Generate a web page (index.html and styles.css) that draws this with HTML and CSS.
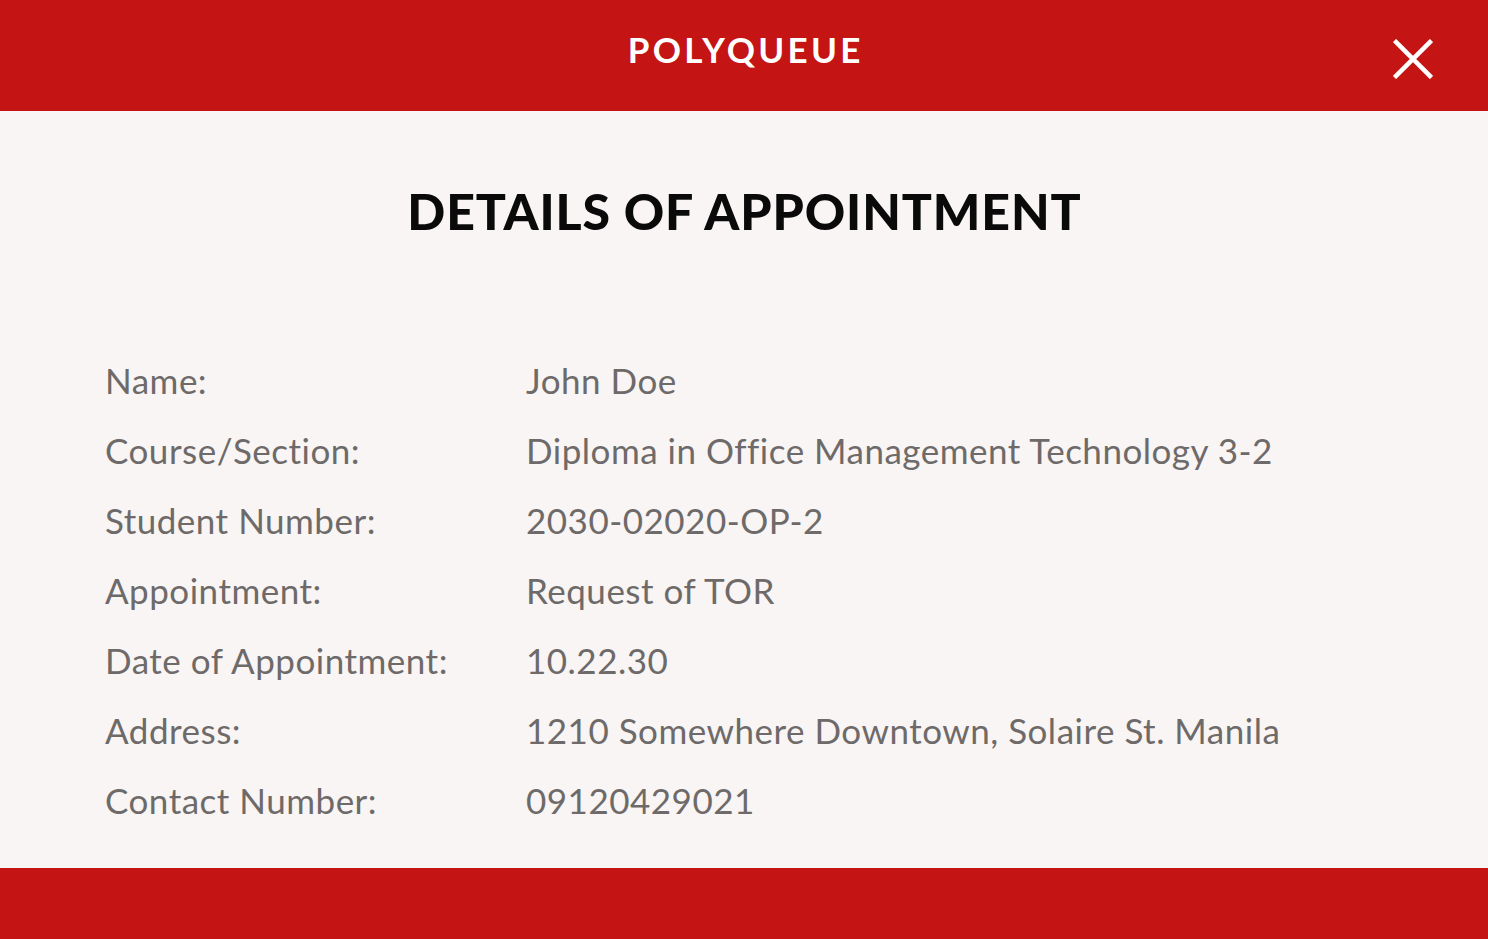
FILE: index.html
```html
<!DOCTYPE html>
<html lang="en">
<head>
<meta charset="utf-8">
<title>Polyqueue - Details of Appointment</title>
<link rel="stylesheet" href="styles.css">
</head>
<body>
<div class="page">
  <header class="topbar">
    <div class="brand">POLYQUEUE</div>
    <button class="close" aria-label="Close">
      <svg width="40" height="40" viewBox="0 0 40 40"><path d="M1.5 1.5 L38.5 38.5 M38.5 1.5 L1.5 38.5" stroke="#fff" stroke-width="4.5" fill="none"/></svg>
    </button>
  </header>
  <main class="content">
    <h1 class="heading">DETAILS OF APPOINTMENT</h1>
    <dl class="details">
      <div class="row"><dt>Name:</dt><dd>John Doe</dd></div>
      <div class="row"><dt>Course/Section:</dt><dd>Diploma in Office Management Technology 3-2</dd></div>
      <div class="row"><dt>Student Number:</dt><dd>2030-02020-OP-2</dd></div>
      <div class="row"><dt>Appointment:</dt><dd>Request of TOR</dd></div>
      <div class="row"><dt>Date of Appointment:</dt><dd>10.22.30</dd></div>
      <div class="row"><dt>Address:</dt><dd>1210 Somewhere Downtown, Solaire St. Manila</dd></div>
      <div class="row"><dt>Contact Number:</dt><dd>09120429021</dd></div>
    </dl>
  </main>
  <footer class="bottombar"></footer>
</div>
</body>
</html>
```

FILE: styles.css
```css
* { box-sizing: border-box; }
html, body { margin: 0; padding: 0; }
body {
  font-family: Lato, "Open Sans", sans-serif;
  background: #f8f5f4;
}
.page {
  height: 939px;
  display: flex;
  flex-direction: column;
}
.topbar {
  height: 111px;
  background: #c41414;
  display: flex;
  align-items: center;
  justify-content: center;
  position: relative;
  flex-shrink: 0;
}
.brand {
  color: #fff;
  font-weight: 700;
  font-size: 35px;
  letter-spacing: 3.25px;
  padding-left: 3.25px;
  margin-top: -14px;
}
.close {
  position: absolute;
  right: 55px;
  top: 39px;
  background: none;
  border: 0;
  padding: 0;
  width: 40px;
  height: 40px;
  cursor: pointer;
}
.close svg { display: block; }
.content {
  flex: 1;
  padding-top: 70px;
}
.heading {
  margin: 0;
  text-align: center;
  font-size: 50px;
  font-weight: 900;
  letter-spacing: 0.9px;
  padding-left: 0.9px;
  color: #0a0a0a;
  line-height: 60px;
}
.details {
  margin: 104px 0 0 105px;
  padding: 0;
}
.row {
  display: flex;
  height: 70px;
  align-items: center;
}
.row dt, .row dd {
  margin: 0;
  font-size: 35px;
  letter-spacing: 0.5px;
  color: #6e6a69;
}
.row dt { width: 421px; }
.bottombar {
  height: 71px;
  background: #c41414;
  flex-shrink: 0;
}
```
